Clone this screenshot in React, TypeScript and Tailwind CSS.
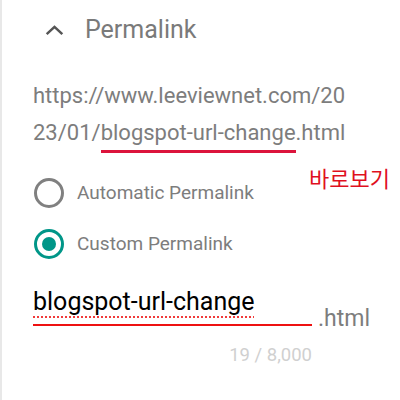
export default function App() {
  return (
    <div className="w-[400px] h-[400px] bg-white border-l-2 border-[#e8e8e8] overflow-hidden font-['Roboto',sans-serif]">
      <div className="flex items-center h-[60px] pl-[40px] gap-[18px]">
        <svg width="25" height="25" viewBox="0 0 24 24" className="text-[#555]">
          <path d="M4.5 15.5 12 8.5l7.5 7" fill="none" stroke="currentColor" strokeWidth="2.4" />
        </svg>
        <span className="text-[25px] text-[#7a7a7a]">Permalink</span>
      </div>

      <div className="pl-[31px] pt-[17px] text-[22px] leading-[37px] text-[#7d7d7d] whitespace-nowrap">
        <div>https://www.leeviewnet.com/20</div>
        <div>
          23/01/
          <span className="relative">
            blogspot-url-change
            <span className="absolute left-0 right-0 -bottom-[8px] h-[3px] bg-[#dc143c]" />
          </span>
          .html
        </div>
      </div>

      <div className="relative pl-[32px] pt-[27px] flex flex-col gap-[21px]">
        <label className="flex items-center gap-[13px]">
          <span className="w-[30px] h-[30px] rounded-full border-[3px] border-[#808080]" />
          <span className="text-[19px] text-[#7d7d7d]">Automatic Permalink</span>
        </label>
        <label className="flex items-center gap-[13px]">
          <span className="w-[30px] h-[30px] rounded-full border-[3px] border-[#009688] flex items-center justify-center">
            <span className="w-[14px] h-[14px] rounded-full bg-[#009688]" />
          </span>
          <span className="text-[19px] text-[#7d7d7d]">Custom Permalink</span>
        </label>
        <span className="absolute left-[307px] top-[10px] text-[22px] text-[#e0101e] font-['Noto_Sans_CJK_KR',sans-serif]">
          바로보기
        </span>
      </div>

      <div className="pl-[31px] pt-[27px] flex items-end gap-[6px]">
        <div className="w-[279px] border-b-2 border-[#ee1111] pb-[6px]">
          <span className="text-[25px] text-black leading-[32px] underline decoration-dotted decoration-[#f03a3a] underline-offset-[6px] decoration-2">
            blogspot-url-change
          </span>
        </div>
        <span className="text-[23px] text-[#7d7d7d] leading-[24px] -mb-[5px]">.html</span>
      </div>
      <div className="w-[310px] text-right pt-[16px] text-[18.5px] text-[#d0d0d0]">19 / 8,000</div>
    </div>
  );
}
